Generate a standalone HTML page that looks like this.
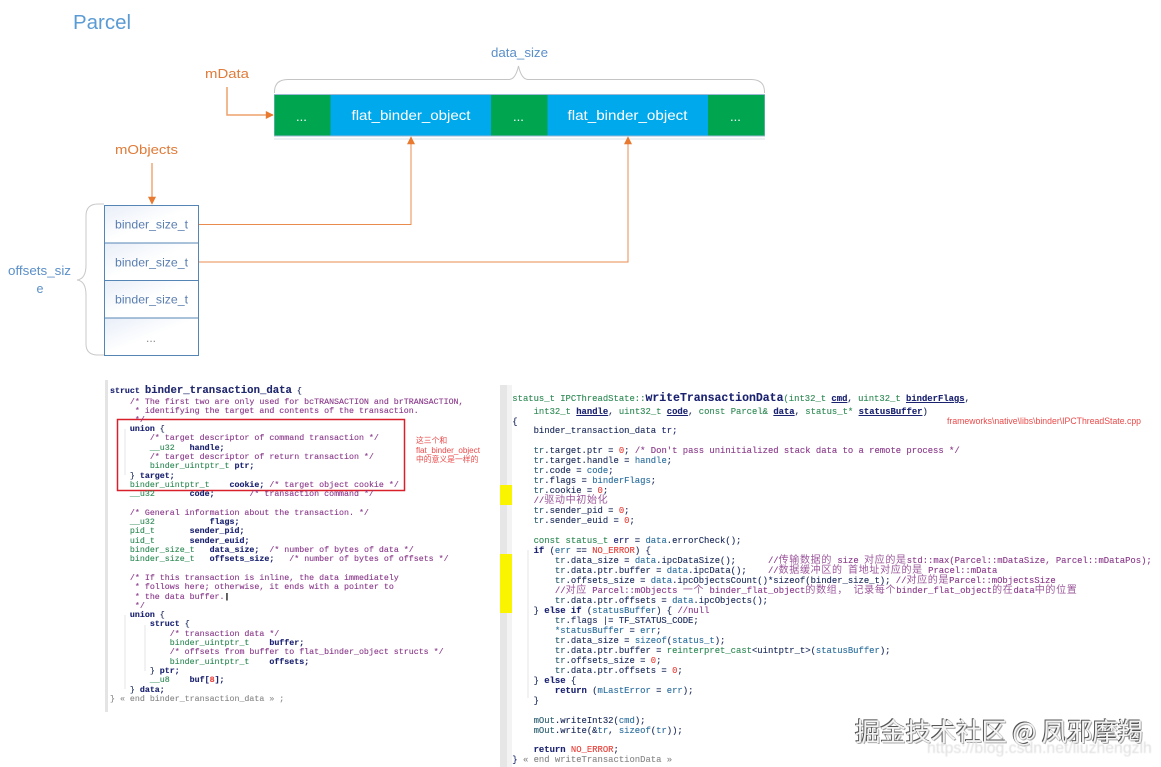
<!DOCTYPE html>
<html lang="zh">
<head>
<meta charset="utf-8">
<title>Parcel</title>
<style>
html,body{margin:0;padding:0;background:#fff}
#w{position:relative;width:1161px;height:767px;overflow:hidden;background:#fff}
svg{position:absolute;left:0;top:0}
svg text{font-family:"Liberation Sans","Noto Sans CJK SC",sans-serif}
.code{position:absolute;margin:0;font-family:"Liberation Mono","Noto Sans CJK SC",monospace;white-space:pre;color:#1a2a5a;filter:blur(.35px);-webkit-text-stroke:.12px currentColor}
.code div{white-space:pre;overflow:visible}
#L{left:110px;top:388px;font-size:8.3px}
#L div{height:9.3px;line-height:9.3px}
#R{left:512.3px;top:416.500px;font-size:8.9px}
#R div{height:9.98px;line-height:9.98px}
.c{font-size:10px;letter-spacing:.68px;line-height:0;font-family:"Noto Sans CJK SC",sans-serif;-webkit-text-stroke:0;opacity:.85}
.g{color:#2f8a55}
.n{color:#1a2270;font-weight:bold}
.p{color:#8a3a8a}
.t{color:#2c5f70}
.b{color:#2c6f9e}
.r{color:#e8403a}
.k{color:#20286e;font-weight:bold}
.y{color:#888}
.u{text-decoration:underline}
.box{position:absolute}
</style>
</head>
<body>
<div id="w">
<svg width="1161" height="767" viewBox="0 0 1161 767">
<defs>
<linearGradient id="cell" x1="0" y1="0" x2="1" y2="1">
<stop offset="0" stop-color="#e8eef8"/><stop offset=".5" stop-color="#ffffff"/>
</linearGradient>
<marker id="a" viewBox="0 0 10 10" refX="9" refY="5" markerWidth="9" markerHeight="8" orient="auto" markerUnits="userSpaceOnUse"><path d="M0 0L10 5L0 10z" fill="#e8792f"/></marker>
</defs>
<text x="73" y="29" font-size="20" fill="#5b9bd5" textLength="58" lengthAdjust="spacingAndGlyphs">Parcel</text>
<text x="491" y="57" font-size="13" fill="#5b8fc9" textLength="57" lengthAdjust="spacingAndGlyphs">data_size</text>
<text x="205" y="78" font-size="13" fill="#e07b39" textLength="44" lengthAdjust="spacingAndGlyphs">mData</text>
<text x="115" y="154" font-size="13" fill="#e07b39" textLength="63" lengthAdjust="spacingAndGlyphs">mObjects</text>
<path d="M274.500 93V92Q274.500 79.500 288 79.500H509Q515.500 79.500 518.500 66Q521.500 79.500 528 79.500H751Q764.500 79.500 764.500 92V93" fill="none" stroke="#c4c4c4" stroke-width="1"/>
<rect x="274" y="138" width="491" height="2" fill="#eef1f4"/>
<rect x="274" y="94" width="491" height="42.500" fill="#9cb8d4"/>
<rect x="274.500" y="95" width="56" height="40.500" fill="#00a64f"/>
<rect x="330.500" y="95" width="160.500" height="40.500" fill="#00a8ec"/>
<rect x="491" y="95" width="56.500" height="40.500" fill="#00a64f"/>
<rect x="547.500" y="95" width="160.500" height="40.500" fill="#00a8ec"/>
<rect x="708" y="95" width="56.500" height="40.500" fill="#00a64f"/>
<g fill="#fff" font-size="13">
<text x="296" y="121">...</text>
<text x="351.500" y="120" font-size="14" textLength="119" lengthAdjust="spacingAndGlyphs">flat_binder_object</text>
<text x="513" y="121">...</text>
<text x="567.500" y="120" font-size="14" textLength="120" lengthAdjust="spacingAndGlyphs">flat_binder_object</text>
<text x="730" y="121">...</text>
</g>
<path d="M227 87V115H273" fill="none" stroke="#eda06c" stroke-width="1.500" marker-end="url(#a)"/>
<path d="M152 163V204" fill="none" stroke="#e8792f" stroke-width="1" marker-end="url(#a)"/>
<path d="M199 224.500H411V137" fill="none" stroke="#e98b4c" stroke-width="1" marker-end="url(#a)"/>
<path d="M199 262H628V137" fill="none" stroke="#e98b4c" stroke-width="1" marker-end="url(#a)"/>
<path d="M104 204H98Q86 204 86 216V265Q86 279 77 280Q86 281 86 295V344Q86 355 98 355H104" fill="none" stroke="#c8c8c8" stroke-width="1"/>
<g fill="url(#cell)" stroke="#5585b5" stroke-width="1">
<rect x="104.500" y="205.500" width="94" height="37.500"/>
<rect x="104.500" y="243" width="94" height="37.500"/>
<rect x="104.500" y="280.500" width="94" height="37.500"/>
<rect x="104.500" y="318" width="94" height="37.500"/>
</g>
<g fill="#5a7eb0" font-size="12">
<text x="115" y="228.500" textLength="73" lengthAdjust="spacingAndGlyphs">binder_size_t</text>
<text x="115" y="266.500" textLength="73" lengthAdjust="spacingAndGlyphs">binder_size_t</text>
<text x="115" y="303.500" textLength="73" lengthAdjust="spacingAndGlyphs">binder_size_t</text>
<text x="146" y="342" fill="#888">...</text>
</g>
<g fill="#5b8fc9" font-size="12.500">
<text x="8" y="275" textLength="63" lengthAdjust="spacingAndGlyphs">offsets_siz</text>
<text x="36.500" y="293">e</text>
</g>
<rect x="105" y="380" width="3" height="332" fill="#e4e4e4"/>
<rect x="500" y="385" width="7" height="382" fill="#e6e6e6"/>
<rect x="507" y="385" width="5" height="382" fill="#f3f3f3"/>
<rect x="500" y="485" width="12" height="20" fill="#fbf400"/>
<rect x="500" y="554" width="12" height="59" fill="#fbf400"/>
<path d="M125 429V475M125 615V689M145 625V671M528 550V698" stroke="#e6e6e6" stroke-width="1" fill="none"/>
<rect x="117.500" y="419.500" width="287" height="71" fill="none" stroke="#d9202a" stroke-width="1.500"/>
<g fill="#ea4a4a" font-size="8">
<text x="416" y="443" font-size="7.800">这三个和</text>
<text x="416" y="453" textLength="64" lengthAdjust="spacingAndGlyphs">flat_binder_object</text>
<text x="416" y="462" font-size="7.800">中的意义是一样的</text>
</g>
<text x="947" y="424" font-size="9" fill="#ea4a4a" textLength="194" lengthAdjust="spacingAndGlyphs">frameworks\native\libs\binder\IPCThreadState.cpp</text>
</svg>

<pre id="L" class="code"><div style="height:8px;line-height:8px"><span class="n">struct</span> <span class="k" style="font-size:10.66px;line-height:0">binder_transaction_data</span> {</div><div style="height:10.6px"></div><div style="position:absolute;top:9.900px"><span class="p">    /* The first two are only used for bcTRANSACTION and brTRANSACTION,</span></div><div class="p"><span>     * identifying the target and contents of the transaction.</span></div><div class="p">     */</div><div>    <span class="n">union</span> {</div><div class="p">        /* target descriptor of command transaction */</div><div><span class="g">        __u32</span>   <span class="n">handle;</span></div><div class="p">        /* target descriptor of return transaction */</div><div><span class="g">        binder_uintptr_t</span> <span class="n">ptr;</span></div><div>    } <span class="n">target;</span></div><div><span class="g">    binder_uintptr_t</span>    <span class="n">cookie;</span> <span class="p">/* target object cookie */</span></div><div><span class="g">    __u32</span>       <span class="n">code;</span>       <span class="p">/* transaction command */</span></div><div></div><div class="p">    /* General information about the transaction. */</div><div><span class="g">    __u32</span>           <span class="n">flags;</span></div><div><span class="g">    pid_t</span>       <span class="n">sender_pid;</span></div><div><span class="g">    uid_t</span>       <span class="n">sender_euid;</span></div><div><span class="g">    binder_size_t</span>   <span class="n">data_size;</span>  <span class="p">/* number of bytes of data */</span></div><div><span class="g">    binder_size_t</span>   <span class="n">offsets_size;</span>   <span class="p">/* number of bytes of offsets */</span></div><div></div><div class="p">    /* If this transaction is inline, the data immediately</div><div class="p">     * follows here; otherwise, it ends with a pointer to</div><div class="p">     * the data buffer.<span style="color:#000;font-weight:bold">|</span></div><div class="p">     */</div><div>    <span class="n">union</span> {</div><div>        <span class="n">struct</span> {</div><div class="p">            /* transaction data */</div><div><span class="g">            binder_uintptr_t</span>    <span class="n">buffer;</span></div><div class="p">            /* offsets from buffer to flat_binder_object structs */</div><div><span class="g">            binder_uintptr_t</span>    <span class="n">offsets;</span></div><div>        } <span class="n">ptr;</span></div><div><span class="g">        __u8</span>    <span class="n">buf[<span class="r">8</span>];</span></div><div>    } <span class="n">data;</span></div><div class="y">} « end binder_transaction_data » ;</div></pre>

<pre class="code" style="left:512.300px;top:393px;font-size:8.9px;line-height:12px"><span class="g">status_t IPCThreadState::</span><span class="n" style="font-size:11.5px;line-height:0">writeTransactionData</span><span class="g">(int32_t</span> <span class="n u">cmd</span>, <span class="g">uint32_t</span> <span class="n u">binderFlags</span>,</pre>
<pre class="code" style="left:512.300px;top:406px;font-size:8.9px;line-height:12px"><span class="g">    int32_t</span> <span class="n u">handle</span>, <span class="g">uint32_t</span> <span class="n u">code</span>, <span class="g">const Parcel&amp;</span> <span class="n u">data</span>, <span class="g">status_t*</span> <span class="n u">statusBuffer</span>)</pre>

<pre id="R" class="code"><div>{</div><div>    binder_transaction_data <span class="k" style="font-weight:normal">tr;</span></div><div></div><div><span class="t">    tr</span>.target.ptr = <span class="r">0</span>; <span class="p">/* Don't pass uninitialized stack data to a remote process */</span></div><div><span class="t">    tr</span>.target.handle = <span class="b">handle</span>;</div><div><span class="t">    tr</span>.code = <span class="b">code</span>;</div><div><span class="t">    tr</span>.flags = <span class="b">binderFlags</span>;</div><div><span class="t">    tr</span>.cookie = <span class="r">0</span>;</div><div class="p">    //<span class="c">驱动中初始化</span></div><div><span class="t">    tr</span>.sender_pid = <span class="r">0</span>;</div><div><span class="t">    tr</span>.sender_euid = <span class="r">0</span>;</div><div></div><div><span class="g">    const status_t</span> <span class="n" style="font-weight:normal">err</span> = <span class="b">data</span>.errorCheck();</div><div>    <span class="n">if</span> (<span class="b">err</span> == <span class="r">NO_ERROR</span>) {</div><div><span class="t">        tr</span>.data_size = <span class="b">data</span>.ipcDataSize();      <span class="p">//<span class="c">传输数据的</span> size <span class="c">对应的是</span>std::max(Parcel::mDataSize, Parcel::mDataPos);</span></div><div><span class="t">        tr</span>.data.ptr.buffer = <span class="b">data</span>.ipcData();    <span class="p">//<span class="c">数据缓冲区的</span> <span class="c">首地址对应的是</span> Pracel::mData</span></div><div><span class="t">        tr</span>.offsets_size = <span class="b">data</span>.ipcObjectsCount()*sizeof(binder_size_t); <span class="p">//<span class="c">对应的是</span>Parcel::mObjectsSize</span></div><div class="p">        //<span class="c">对应</span> Parcel::mObjects <span class="c">一个</span> binder_flat_object<span class="c">的数组，</span> <span class="c">记录每个</span>binder_flat_object<span class="c">的在</span>data<span class="c">中的位置</span></div><div><span class="t">        tr</span>.data.ptr.offsets = <span class="b">data</span>.ipcObjects();</div><div>    } <span class="n">else if</span> (<span class="b">statusBuffer</span>) { <span class="p">//null</span></div><div><span class="t">        tr</span>.flags |= TF_STATUS_CODE;</div><div><span class="b">        *statusBuffer</span> = <span class="b">err</span>;</div><div><span class="t">        tr</span>.data_size = <span class="b">sizeof</span>(<span class="b">status_t</span>);</div><div><span class="t">        tr</span>.data.ptr.buffer = <span class="g">reinterpret_cast</span>&lt;uintptr_t&gt;(<span class="b">statusBuffer</span>);</div><div><span class="t">        tr</span>.offsets_size = <span class="r">0</span>;</div><div><span class="t">        tr</span>.data.ptr.offsets = <span class="r">0</span>;</div><div>    } <span class="n">else</span> {</div><div>        <span class="n">return</span> (<span class="b">mLastError</span> = <span class="b">err</span>);</div><div>    }</div><div></div><div><span class="t">    mOut</span>.writeInt32(<span class="b">cmd</span>);</div><div><span class="t">    mOut</span>.write(&amp;<span class="b">tr</span>, <span class="b">sizeof</span>(<span class="b">tr</span>));</div><div></div><div>    <span class="n">return</span> <span class="r">NO_ERROR</span>;</div><div class="y"><span style="color:#1a2a6a">}</span> « end writeTransactionData »</div></pre>

<div class="box" style="left:855px;top:714px;font:25.500px/34px 'Noto Sans CJK SC',sans-serif;color:#f4f4f4;white-space:pre;text-shadow:-1px -1px 0 #555,1px 1px 0 #aaa,0 0 1px #666;letter-spacing:-.2px">掘金技术社区 @ 凤邪摩羯</div>
<div class="box" style="left:927px;top:739px;font:15.800px/20px 'Liberation Sans',sans-serif;color:#dfdfdf;white-space:pre;filter:blur(.4px)">https://blog.csdn.net/liuzhengzlh</div>
</div>
</body>
</html>
